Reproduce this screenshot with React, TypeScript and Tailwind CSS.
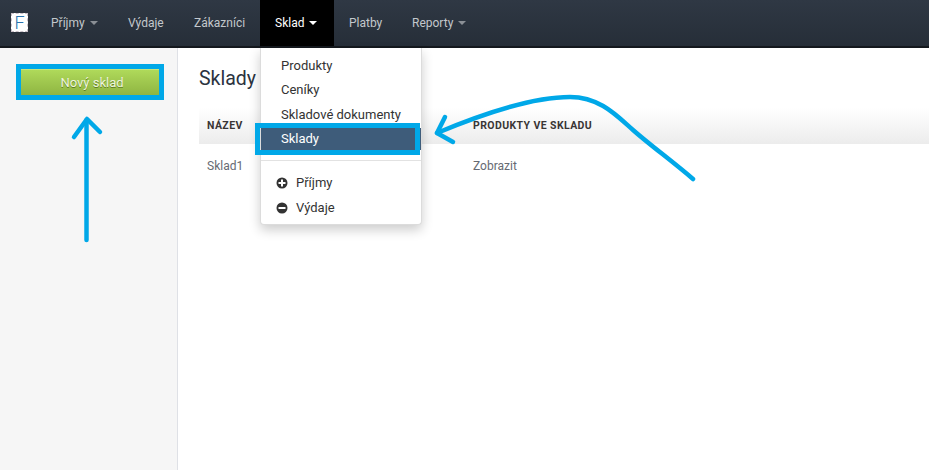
function Caret({ white }: { white?: boolean }) {
  return <span className={`ml-[5px] inline-block w-0 h-0 border-x-[4px] border-x-transparent border-t-[4px] ${white ? "border-t-white" : "border-t-[#8a8f95]"}`} />;
}
function NavItem({ label, caret, active, width }: { label: string; caret?: boolean; active?: boolean; width: string }) {
  return (
    <div className={`flex items-center pl-[15px] h-[46px] text-[12px] ${width} ${active ? "bg-black text-white" : "text-[#c3c8cc]"}`}>
      {label}
      {caret && <Caret white={active} />}
    </div>
  );
}
function MenuLink({ label }: { label: string }) {
  return <div className="h-[24.5px] pl-[20px] flex items-center text-[13px] text-[#333333]">{label}</div>;
}
function Circle({ minus }: { minus?: boolean }) {
  return (
    <svg width="12" height="12" viewBox="0 0 12 12" className="mr-[8px]">
      <circle cx="6" cy="6" r="5.5" fill="#333333" />
      <rect x="2.5" y="5" width="7" height="2" fill="#fff" />
      {!minus && <rect x="5" y="2.5" width="2" height="7" fill="#fff" />}
    </svg>
  );
}
export default function App() {
  return (
    <div className="relative w-[929px] h-[470px] overflow-hidden bg-white font-['Roboto','Liberation_Sans',sans-serif]">
      <header className="flex h-[48px] bg-gradient-to-b from-[#2f3844] to-[#262e38] border-b-2 border-b-[#14181d]">
        <div className="w-[36px] flex items-start pl-[11px] pt-[13px]">
          <div className="w-[17px] h-[19px] bg-white border border-dashed border-[#c9c0c8] flex items-center justify-center text-[18px] font-light leading-none text-[#2a72ad]">F</div>
        </div>
        <NavItem width="w-[77px]" label="Příjmy" caret />
        <NavItem width="w-[66px]" label="Výdaje" />
        <NavItem width="w-[81px]" label="Zákazníci" />
        <NavItem width="w-[74px]" label="Sklad" caret active />
        <NavItem width="w-[63px]" label="Platby" />
        <NavItem width="w-[90px]" label="Reporty" caret />
      </header>
      <div className="flex h-[422px]">
        <aside className="w-[178px] shrink-0 bg-[#f6f6f6] border-r border-r-[#dfe1e6] pt-[16px] pl-[16px]">
          <div className="w-[148px] h-[36px] border-[5px] border-[#00a8e8]">
            <div className="h-full bg-gradient-to-b from-[#afd95a] to-[#8fb542] border-t border-t-[#c5e67e] flex items-center justify-center text-[13px] text-[#eef6dc] [text-shadow:0_1px_0_#5f7d25] pl-[4px]">Nový sklad</div>
          </div>
        </aside>
        <main className="flex-1 pl-[21px] pt-[18px]">
          <h1 className="text-[19.5px] leading-[26px] text-[#2b3340] font-normal">Sklady</h1>
          <div className="mt-[16px] h-[36px] flex items-center bg-gradient-to-b from-white to-[#ececec] text-[10.5px] font-bold tracking-[0.4px] text-[#3a3535]">
            <div className="pl-[8px] w-[274px]">NÁZEV</div>
            <div>PRODUKTY VE SKLADU</div>
          </div>
          <div className="h-[44px] flex items-center text-[12px] text-[#666a72]">
            <div className="pl-[8px] w-[274px]">Sklad1</div>
            <div>Zobrazit</div>
          </div>
        </main>
      </div>

      <div className="absolute left-[260px] top-[48px] w-[162px] h-[177px] bg-white border border-[#dcdcdc] border-t-0 rounded-b-[4px] shadow-[0_5px_12px_rgba(0,0,0,0.2)] pt-[5px]">
        <MenuLink label="Produkty" />
        <MenuLink label="Ceníky" />
        <MenuLink label="Skladové dokumenty" />
        <div className="h-[22px] mt-[1px] bg-[#3e5c7a] pl-[20px] flex items-center text-[13px] text-white">Sklady</div>
        <div className="mt-[10px] h-px bg-[#e2e2e2]" />
        <div className="h-[24px] mt-[10px] pl-[15px] flex items-center text-[13px] text-[#333333]"><Circle />Příjmy</div>
        <div className="h-[24px] mt-[1px] pl-[15px] flex items-center text-[13px] text-[#333333]"><Circle minus />Výdaje</div>
      </div>
      <div className="absolute left-[255px] top-[123px] w-[165px] h-[32px] border-[5px] border-[#00a8e8]" />

      <svg className="absolute left-0 top-0 pointer-events-none" width="929" height="470" viewBox="0 0 929 470" fill="none" stroke="#00a8e8" strokeWidth="4.5" strokeLinecap="round" strokeLinejoin="round">
        <path d="M86.5 240 L86.5 120" />
        <path d="M74 137 L87 119 L100 132" />
        <path d="M693 179 C672 161 650 145 633 130 C617 116 600 97 570 97 C530 97 480 115 437 133" />
        <path d="M445 117 L437 133 L453 142" />
      </svg>
    </div>
  );
}
